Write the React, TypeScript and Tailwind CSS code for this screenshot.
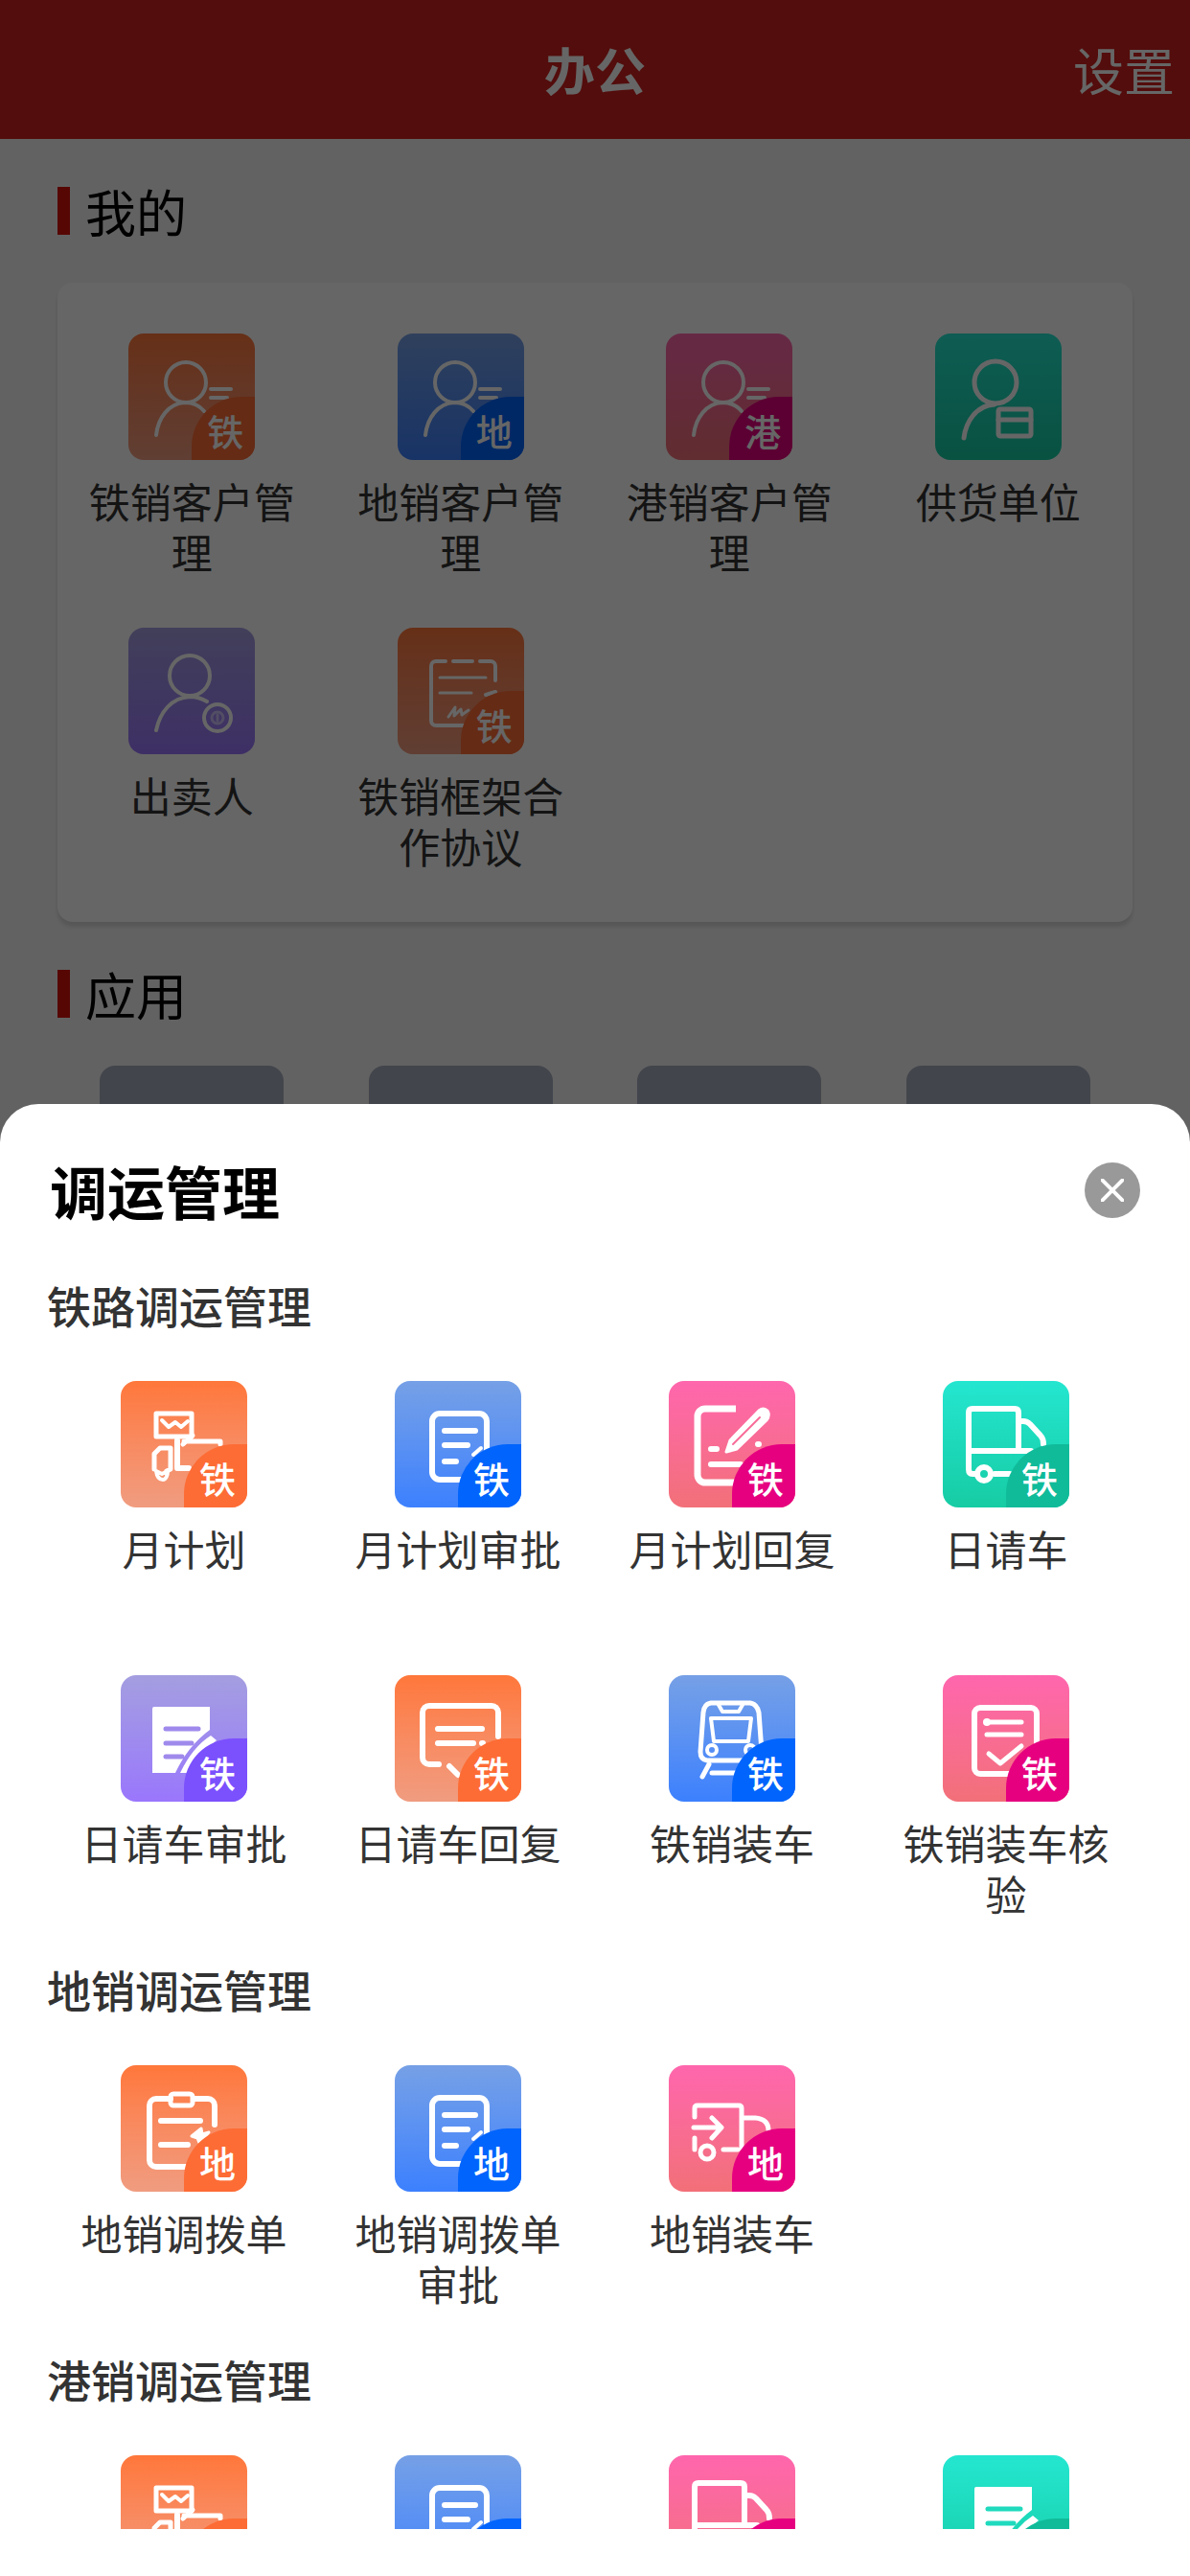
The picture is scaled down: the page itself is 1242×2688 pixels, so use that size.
import type { ReactNode } from "react";

type Tone = "orange" | "blue" | "pink" | "teal" | "purple";

const tileTone: Record<Tone, string> = {
  orange: "from-[#ff773a] to-[#f09c80]",
  blue: "from-[#76a0e6] to-[#3c80fe]",
  pink: "from-[#ff66ad] to-[#f27078]",
  teal: "from-[#24e6d0] to-[#16cca4]",
  purple: "from-[#a49ee0] to-[#9a76fc]",
};

const badgeTone: Record<Tone, string> = {
  orange: "bg-[#fd6c35]",
  blue: "bg-[#0064fd]",
  pink: "bg-[#e60080]",
  teal: "bg-[#10bb9a]",
  purple: "bg-[#7b50fd]",
};

const customer = (
  <g strokeWidth="4">
    <circle cx="60" cy="51" r="21" />
    <path d="M29 106C31 88 42 73 59 72C67 72 74 75 79 81M86 58H107M86 67H103" />
  </g>
);

const supplier = (
  <g strokeWidth="5">
    <circle cx="63" cy="51" r="22" />
    <path d="M30 109C32 92 43 75 62 74" />
    <rect x="66" y="79" width="34" height="28" rx="2" />
    <path d="M66 90H100" />
  </g>
);

const seller = (
  <g strokeWidth="4">
    <circle cx="64" cy="50" r="21" />
    <path d="M29 107C33 88 45 73 64 72C71 72 77 74 82 77" />
    <circle cx="93" cy="94" r="14" />
    <circle cx="93" cy="94" r="6" strokeWidth="3" opacity="0.5" />
    <path d="M93 91V97" strokeWidth="3" opacity="0.5" />
  </g>
);

const agreement = (
  <g strokeWidth="4">
    <path d="M69 102H40a5 5 0 0 1-5-5V40a5 5 0 0 1 5-5H50M58 35H78M86 35H97a5 5 0 0 1 5 5V55M92 70L102 67" />
    <path d="M44 52H92M44 68H77M53 93L60 83L59 92L66 85L67 91L74 86" strokeWidth="3" />
  </g>
);

const excavator = (
  <g strokeWidth="5">
    <rect x="37" y="34" width="37" height="24" />
    <path d="M43 41L50 48L57 43L63 48L70 42" strokeWidth="4" />
    <path d="M75 57L65 66M66 63H104V66" />
    <path d="M59 62V91H71" strokeWidth="6" />
    <path d="M35 92V76L41 70H52V92L48 94" />
    <path d="M37 94C38 102 42 103 44 103C47 103 49 99 49 94L43 97Z" strokeWidth="4" />
  </g>
);

const review = (
  <g>
    <rect x="39" y="34" width="57" height="69" rx="8" />
    <path d="M52 52H84M52 67H76M52 84H64" />
    <path d="M82 77L90 70" strokeWidth="4" />
  </g>
);

const reply = (
  <g>
    <path d="M70 29H38a8 8 0 0 0-8 8V98a8 8 0 0 0 8 8H70" strokeLinecap="butt" strokeWidth="7" />
    <path d="M60 74L64 62L94 31Q99 27 103 31Q106 36 102 41L71 71Z" fill="#fff" strokeWidth="3" />
    <path d="M67 66L95 38" stroke="#f96b98" strokeWidth="2" />
    <path d="M44 71H50M44 87H75M93 66H94" />
  </g>
);

const truck = (
  <g>
    <path d="M35 97H31Q27 97 27 92V33Q27 29 31 29H75Q79 29 79 33V73M27 73H92" />
    <path d="M79 42H84Q88 42 91 45L102 57Q105 60 105 66M54 97H70" />
    <circle cx="43" cy="97" r="7" />
  </g>
);

const draft = (lineColor: string) => (
  <g stroke="none">
    <path d="M35 33H93V57Q70 74 57 102H33V35Q33 33 35 33Z" fill="#fff" />
    <path d="M62 102Q75 75 94 63L100 68Q82 83 70 102Z" fill="#fff" />
    <path d="M47 56H81M47 71H74M47 85H64" stroke={lineColor} strokeWidth="5" />
  </g>
);

const message = (
  <g>
    <path d="M46 93H36a7 7 0 0 1-7-7V39a7 7 0 0 1 7-7H101a7 7 0 0 1 7 7V64" />
    <path d="M45 56H91M45 71H82M91 71H92M57 95L66 104" />
  </g>
);

const train = (
  <g strokeWidth="5">
    <path d="M44 29H85Q92 30 94 39L97 80Q97 88 90 89H40Q33 88 33 80L36 39Q37 30 44 29Z" />
    <path d="M44 45H86L83 69H47ZM52 31L56 38H73L77 31" strokeWidth="4" />
    <circle cx="45" cy="78" r="5" strokeWidth="4" />
    <circle cx="85" cy="78" r="5" strokeWidth="4" />
    <path d="M42 93L35 106M45 102H75" />
  </g>
);

const verify = (
  <g>
    <rect x="33" y="34" width="65" height="69" rx="6" />
    <path d="M45 49H82M46 62H82M48 82L60 92L82 74" strokeWidth="5" />
    <circle cx="46" cy="49" r="4" fill="#fff" stroke="none" />
  </g>
);

const clipboard = (
  <g>
    <path d="M52 35H37a7 7 0 0 0-7 7V99a7 7 0 0 0 7 7H72M76 35H91a7 7 0 0 1 7 7V62" />
    <rect x="52" y="30" width="23" height="12" rx="3" strokeWidth="5" />
    <path d="M42 58H83M42 83H70" />
    <path d="M74 74L84 66L85 72L92 70L82 81L80 76Z" fill="#fff" strokeWidth="3" />
  </g>
);

const loading = (
  <g strokeWidth="5">
    <path d="M27 54V45Q27 42 30 42H73Q76 42 76 45V87M78 55H90Q104 56 104 68" />
    <path d="M26 65H54M45 55L55 65L45 76M27 76V88M57 88H72" />
    <circle cx="40" cy="91" r="7" />
  </g>
);

type Entry = { label: string; tone: Tone; art: ReactNode; badge?: string };

const mine: Entry[] = [
  { label: "铁销客户管理", tone: "orange", art: customer, badge: "铁" },
  { label: "地销客户管理", tone: "blue", art: customer, badge: "地" },
  { label: "港销客户管理", tone: "pink", art: customer, badge: "港" },
  { label: "供货单位", tone: "teal", art: supplier },
  { label: "出卖人", tone: "purple", art: seller },
  { label: "铁销框架合作协议", tone: "orange", art: agreement, badge: "铁" },
];

const groups: { title: string; entries: Entry[] }[] = [
  {
    title: "铁路调运管理",
    entries: [
      { label: "月计划", tone: "orange", art: excavator, badge: "铁" },
      { label: "月计划审批", tone: "blue", art: review, badge: "铁" },
      { label: "月计划回复", tone: "pink", art: reply, badge: "铁" },
      { label: "日请车", tone: "teal", art: truck, badge: "铁" },
      { label: "日请车审批", tone: "purple", art: draft("#9f8aec"), badge: "铁" },
      { label: "日请车回复", tone: "orange", art: message, badge: "铁" },
      { label: "铁销装车", tone: "blue", art: train, badge: "铁" },
      { label: "铁销装车核验", tone: "pink", art: verify, badge: "铁" },
    ],
  },
  {
    title: "地销调运管理",
    entries: [
      { label: "地销调拨单", tone: "orange", art: clipboard, badge: "地" },
      { label: "地销调拨单审批", tone: "blue", art: review, badge: "地" },
      { label: "地销装车", tone: "pink", art: loading, badge: "地" },
    ],
  },
  {
    title: "港销调运管理",
    entries: [
      { label: "月计划", tone: "orange", art: excavator, badge: "港" },
      { label: "月计划审批", tone: "blue", art: review, badge: "港" },
      { label: "日请车", tone: "pink", art: truck, badge: "港" },
      { label: "日请车审批", tone: "teal", art: draft("#1fdabd"), badge: "港" },
    ],
  },
];

function Tile({ entry }: { entry: Entry }) {
  return (
    <button type="button" className="flex flex-col items-center gap-4 px-8">
      <span
        className={`relative block size-[132px] overflow-hidden rounded-2xl bg-linear-to-b ${tileTone[entry.tone]}`}
      >
        <svg
          viewBox="0 0 132 132"
          className="size-full"
          fill="none"
          stroke="#fff"
          strokeWidth="6"
          strokeLinecap="round"
          strokeLinejoin="round"
          aria-hidden="true"
        >
          {entry.art}
        </svg>
        {entry.badge && (
          <span
            className={`absolute right-0 bottom-0 flex size-[66px] items-center justify-center rounded-tl-[52px] pt-1 pl-1 text-[38px] leading-none font-medium text-white ${badgeTone[entry.tone]}`}
          >
            {entry.badge}
          </span>
        )}
      </span>
      <span className="min-h-[106px] text-center text-[43px] leading-[53px] text-[#333]">{entry.label}</span>
    </button>
  );
}

function SectionTitle({ children }: { children: ReactNode }) {
  return (
    <h2 className="flex h-[150px] items-center gap-4 text-[53px] leading-none text-black">
      <span className="h-[50px] w-[13px] bg-[#d8120c]" />
      {children}
    </h2>
  );
}

export default function App() {
  return (
    <div className="relative h-screen overflow-hidden bg-[#f5f5f5] font-['Noto_Sans_CJK_SC',sans-serif]">
      <header className="grid h-[145px] grid-cols-3 items-center bg-[#cf221e] px-4 text-[53px] leading-none text-white">
        <h1 className="col-start-2 text-center font-bold">办公</h1>
        <button type="button" className="justify-self-end">
          设置
        </button>
      </header>

      <main className="px-[60px]">
        <SectionTitle>我的</SectionTitle>
        <section className="grid grid-cols-4 gap-y-[53px] rounded-2xl bg-white py-[53px] shadow-[0_5px_4px_rgba(0,0,0,0.12)]">
          {mine.map((entry) => (
            <Tile key={entry.label} entry={entry} />
          ))}
        </section>
        <SectionTitle>应用</SectionTitle>
        <section className="grid grid-cols-4 justify-items-center">
          {["a", "b", "c", "d"].map((id) => (
            <div key={id} className="size-48 rounded-2xl bg-[#a5acbd]" />
          ))}
        </section>
      </main>

      <div className="absolute inset-0 flex flex-col justify-end bg-black/60">
        <div
          role="dialog"
          aria-labelledby="sheet-title"
          className="flex h-4/7 flex-col rounded-t-[40px] bg-white pb-[49px]"
        >
          <div className="flex h-[175px] shrink-0 items-center justify-between px-[52px] pt-1">
            <h2 id="sheet-title" className="text-[60px] leading-none font-bold text-black">
              调运管理
            </h2>
            <button
              type="button"
              aria-label="关闭"
              className="flex size-[58px] items-center justify-center rounded-full bg-[#999]"
            >
              <svg viewBox="0 0 24 24" className="size-6" stroke="#fff" strokeWidth="4" strokeLinecap="round" aria-hidden="true">
                <path d="M1 1L23 23M23 1L1 23" />
              </svg>
            </button>
          </div>
          <div className="flex min-h-0 flex-1 flex-col gap-[39px] overflow-y-auto px-[49px] [scrollbar-width:none]">
            {groups.map((group) => (
              <section key={group.title} className="flex shrink-0 flex-col gap-[46px]">
                <h3 className="text-[46px] leading-[68px] font-medium text-[#333]">{group.title}</h3>
                <div className="grid grid-cols-4 gap-y-[53px]">
                  {group.entries.map((entry) => (
                    <Tile key={entry.label} entry={entry} />
                  ))}
                </div>
              </section>
            ))}
          </div>
        </div>
      </div>
    </div>
  );
}
